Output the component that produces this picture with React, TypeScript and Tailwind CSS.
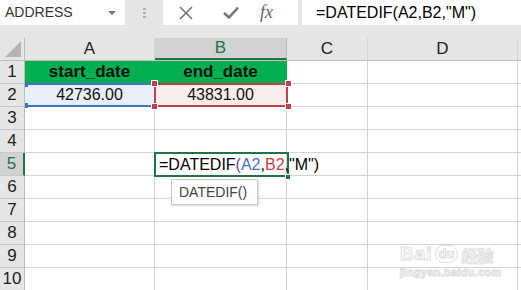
import React from "react";

const cols = ["A", "B", "C", "D", "E"];
const colW = ["w-[130px]", "w-[132px]", "w-[81px]", "w-[150px]", "w-[40px]"];
const rows = [1, 2, 3, 4, 5, 6, 7, 8, 9, 10];

function Toolbar() {
    return (
        <div className="flex h-[25px] bg-[#e6e6e6]">
            <div className="w-[125px] bg-white flex items-center justify-between pl-[5px] pr-[9px] text-[14px] text-[#333]">
                <span>ADDRESS</span>
                <span className="w-0 h-0 border-l-[4px] border-r-[4px] border-t-[4px] border-l-transparent border-r-transparent border-t-[#777]" />
            </div>
            <div className="w-[38px] flex flex-col items-center justify-center gap-[2px]">
                <span className="w-[3px] h-[2px] bg-[#b0b0b0]" />
                <span className="w-[3px] h-[2px] bg-[#b0b0b0]" />
                <span className="w-[3px] h-[2px] bg-[#b0b0b0]" />
            </div>
            <div className="w-[135px] bg-white flex items-center">
                <svg width="14" height="14" viewBox="0 0 14 14" className="ml-[16px]">
                    <path d="M1 1L13 13M13 1L1 13" stroke="#767676" strokeWidth="1.6" />
                </svg>
                <svg width="16" height="13" viewBox="0 0 16 13" className="ml-[30px]">
                    <path d="M1 7L6 11.5L15 1.5" stroke="#767676" strokeWidth="2.6" fill="none" />
                </svg>
                <span className="ml-[21px] italic text-[18px] text-[#666] font-['Liberation_Serif',serif]">fx</span>
            </div>
            <div className="w-[4px]" />
            <div className="flex-1 bg-white flex items-center pl-[14px] text-[16px] text-black">
                =DATEDIF(A2,B2,"M")
            </div>
        </div>
    );
}

export default function App() {
    return (
        <div className="w-[521px] h-[290px] overflow-hidden bg-white font-['Liberation_Sans',sans-serif] relative">
            <Toolbar />
            <div className="h-[13px] bg-[#e6e6e6]" />
            <div className="flex h-[23px] bg-[#e6e6e6] border-b border-[#bdbdbd]">
                <div className="w-[25px] shrink-0 border-r border-[#bdbdbd] relative">
                    <svg width="16" height="16" viewBox="0 0 16 16" className="absolute right-[3px] bottom-[3px]">
                        <path d="M16 0L16 16L0 16Z" fill="#b5b5b5" />
                    </svg>
                </div>
                {cols.map((c, i) => (
                    <div
                        key={c}
                        className={`${colW[i]} shrink-0 flex items-center justify-center text-[17px] border-r ${c === "B" ? "bg-[#d2d2d2] text-[#217346] border-b-2 border-b-[#217346] border-r-[#bdbdbd]" : "text-[#222] border-[#d4d4d4]"}`}
                    >
                        {c === "E" ? "" : c}
                    </div>
                ))}
            </div>
            <div className="relative">
                {rows.map((r) => (
                    <div key={r} className="flex h-[23px]">
                        <div
                            className={`w-[25px] shrink-0 flex items-center justify-center text-[17px] border-b border-[#c8c8c8] ${r === 5 ? "bg-[#d2d2d2] text-[#217346] border-r-2 border-r-[#217346]" : "bg-[#e6e6e6] text-[#222] border-r border-r-[#bdbdbd]"}`}
                        >
                            {r}
                        </div>
                        {cols.map((c, i) => {
                            let cls = "border-[#d4d4d4]";
                            let text = "";
                            let bold = false;
                            if (r === 1 && (c === "A" || c === "B")) {
                                cls = "bg-[#00b050] border-[#00b050]";
                                text = c === "A" ? "start_date" : "end_date";
                                bold = true;
                            }
                            if (r === 2 && c === "A") {
                                cls = "bg-[#e9eff9] border-[#d4d4d4]";
                                text = "42736.00";
                            }
                            if (r === 2 && c === "B") {
                                cls = "bg-[#fbecec] border-[#d4d4d4]";
                                text = "43831.00";
                            }
                            return (
                                <div
                                    key={c}
                                    className={`${colW[i]} shrink-0 border-r border-b flex items-center justify-center text-[16px] text-[#111] ${cls} ${bold ? "font-bold text-[17px]" : ""}`}
                                >
                                    {text}
                                </div>
                            );
                        })}
                    </div>
                ))}

                {/* A2 reference highlight */}
                <div className="absolute left-[25px] top-[22px] w-[131px] h-[24px] border-t-2 border-b-2 border-[#4472c4]" />
                <span className="absolute left-[25px] top-[21px] w-[3px] h-[5px] bg-[#4472c4]" />
                <span className="absolute left-[25px] top-[42px] w-[3px] h-[5px] bg-[#4472c4]" />

                {/* B2 reference highlight */}
                <div className="absolute left-[154px] top-[22px] w-[134px] h-[24px] border-2 border-[#c0404a]" />
                {[
                    "left-[151px] top-[19px]",
                    "left-[285px] top-[19px]",
                    "left-[151px] top-[42px]",
                    "left-[285px] top-[42px]",
                ].map((p) => (
                    <span key={p} className={`absolute ${p} w-[7px] h-[7px] bg-[#c0404a] border border-white`} />
                ))}

                {/* active cell B5 */}
                <div className="absolute left-[154px] top-[91px] w-[135px] h-[25px] border-2 border-[#217346] flex items-center pl-[3px] text-[16px] text-black whitespace-nowrap overflow-visible">
                    <span>=DATEDIF</span>
                    <span className="text-[#6a3fa0]">(</span>
                    <span className="text-[#4472c4]">A2</span>
                    <span>,</span>
                    <span className="text-[#c0404a]">B2</span>
                    <span>,"M")</span>
                </div>
                <span className="absolute left-[285px] top-[113px] w-[6px] h-[6px] bg-[#217346] border border-white" />

                {/* tooltip */}
                <div className="absolute left-[171px] top-[118px] w-[87px] h-[26px] bg-white border border-[#c6c6c6] shadow-[1px_1px_2px_rgba(0,0,0,0.15)] flex items-center pl-[7px] text-[14px] text-[#444]">
                    DATEDIF()
                </div>

                {/* watermark */}
                <div className="absolute left-[400px] top-[183px] flex flex-col items-start text-white [-webkit-text-stroke:1px_#dedede] select-none">
                    <div className="flex items-end">
                        <span className="text-[19px] font-bold tracking-[1px] leading-none">Bai</span>
                        <span className="ml-[2px] px-[3px] rounded-full border border-[#dedede] text-[13px] font-bold leading-[16px]">du</span>
                        <span className="ml-[3px] text-[16px] font-bold leading-none font-['Noto_Sans_CJK_SC',sans-serif]">经验</span>
                    </div>
                    <span className="mt-[4px] text-[11px] leading-none font-bold tracking-[0.3px]">jingyan.baidu.com</span>
                </div>
            </div>
        </div>
    );
}
